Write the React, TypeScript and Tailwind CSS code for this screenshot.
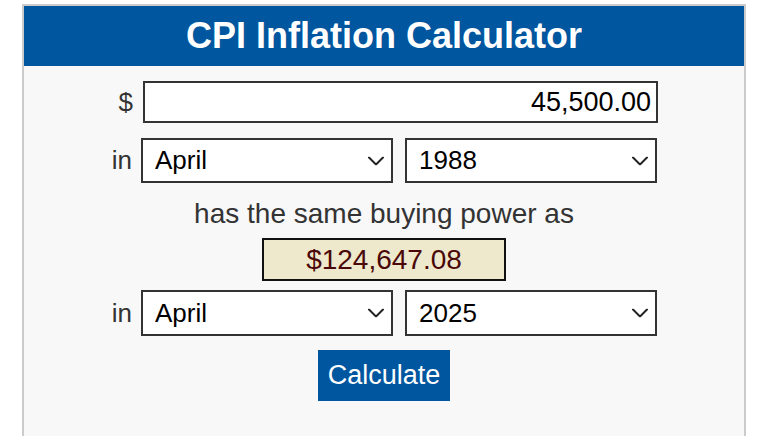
import React from "react";

const months = ["January","February","March","April","May","June","July","August","September","October","November","December"];
const years: string[] = [];
for (let y = 1913; y <= 2025; y++) years.push(String(y));

function Chevron() {
  return (
    <svg className="pointer-events-none absolute right-[9px] top-1/2 -translate-y-1/2" width="16" height="9" viewBox="0 0 16 9" fill="none">
      <path d="M1 1 L8 8 L15 1" stroke="#222" strokeWidth="2" strokeLinecap="round" strokeLinejoin="round" />
    </svg>
  );
}

function Sel({ value, options, h }: { value: string; options: string[]; h: string }) {
  return (
    <div className={`relative w-[252px] ${h}`}>
      <select
        defaultValue={value}
        className="h-full w-full appearance-none rounded-none border-2 border-[#333] bg-white pl-[12px] pr-8 text-[26px] text-black outline-none"
        style={{ fontFamily: '"Liberation Sans", Arial, sans-serif' }}
      >
        {options.map((o) => (
          <option key={o} value={o}>{o}</option>
        ))}
      </select>
      <Chevron />
    </div>
  );
}

export default function App() {
  return (
    <div className="min-h-[436px] w-[760px] bg-white pt-[4px]" style={{ fontFamily: '"Liberation Sans", Arial, sans-serif' }}>
      <div className="ml-[22px] h-[432px] w-[724px] border-x-2 border-t-2 border-[#cccccc] bg-[#f8f8f8]">
        <div className="flex h-[60px] items-center justify-center bg-[#00569f] text-[36px] font-bold text-white">
          CPI Inflation Calculator
        </div>
        <div className="flex flex-col items-center pt-[15px]">
          <div className="flex h-[42px] w-[548px] items-center">
            <span className="w-[23px] shrink-0 text-right text-[26px] text-[#333]">$</span>
            <input
              readOnly
              value="45,500.00"
              className="ml-[10px] h-full w-[515px] shrink-0 rounded-none border-2 border-[#333] bg-white pr-[5px] text-right text-[27px] text-black outline-none"
            />
          </div>
          <div className="mt-[15px] flex w-[548px] items-center">
            <span className="w-[22px] shrink-0 text-right text-[26px] text-[#333]">in</span>
            <div className="ml-[9px] flex gap-[12px]">
              <Sel value="April" options={months} h="h-[45px]" />
              <Sel value="1988" options={years} h="h-[45px]" />
            </div>
          </div>
          <div className="mt-[15px] text-[28px] leading-[32px] text-[#333]">has the same buying power as</div>
          <div className="mt-[8px] flex h-[43px] w-[244px] items-center justify-center border-2 border-[#111] bg-[#eee8cd] text-[28px] text-[#4a0808]">
            $124,647.08
          </div>
          <div className="mt-[9px] flex w-[548px] items-center">
            <span className="w-[22px] shrink-0 text-right text-[26px] text-[#333]">in</span>
            <div className="ml-[9px] flex gap-[12px]">
              <Sel value="April" options={months} h="h-[46px]" />
              <Sel value="2025" options={years} h="h-[46px]" />
            </div>
          </div>
          <button className="mt-[14px] h-[51px] w-[132px] bg-[#00569f] text-[27px] text-white">
            Calculate
          </button>
        </div>
      </div>
    </div>
  );
}
